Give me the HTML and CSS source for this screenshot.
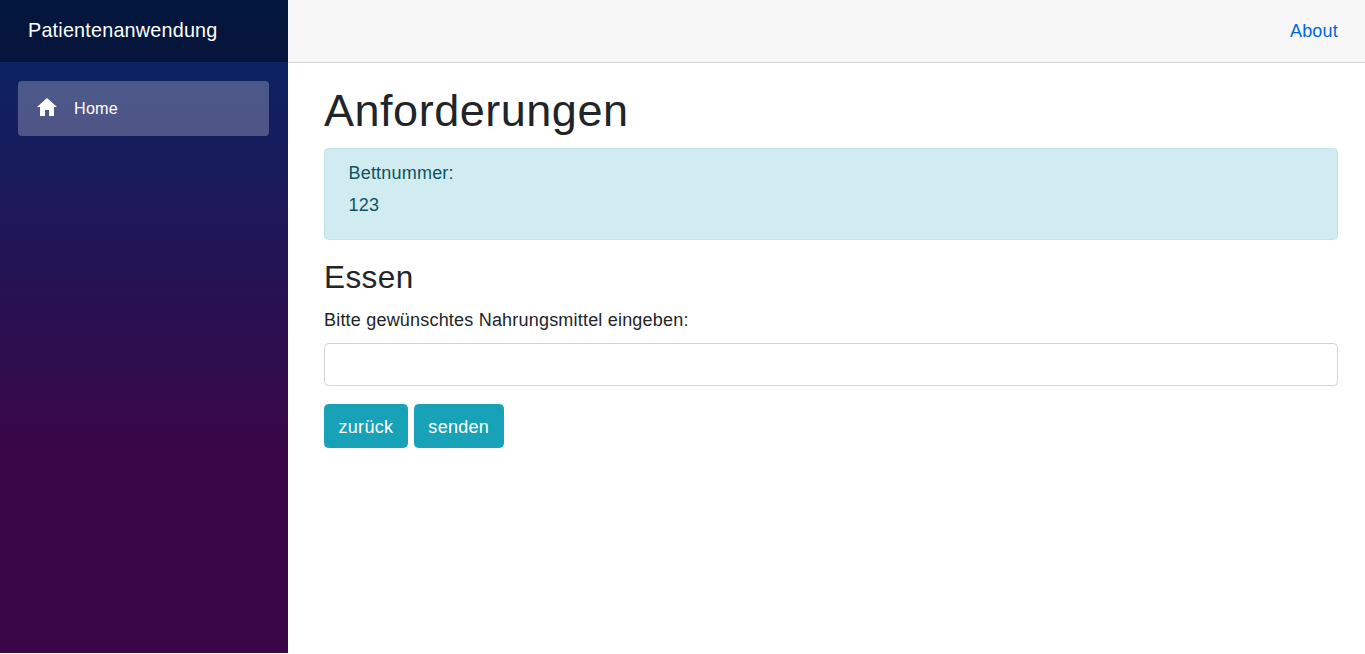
FILE: index.html
```html
<!DOCTYPE html>
<html lang="de">
<head>
    <meta charset="utf-8">
    <title>Patientenanwendung</title>
    <link rel="stylesheet" href="styles.css">
</head>
<body>
    <div class="page">
        <div class="sidebar">
            <div class="brand-row">
                <a class="brand" href="#">Patientenanwendung</a>
            </div>
            <ul class="nav-list">
                <li class="nav-item">
                    <a class="nav-link active" href="#">
                        <span class="nav-icon">
                            <svg width="20" height="18" viewBox="0 0 20 18"><path d="M10 0 0 9h3v9h5v-6h4v6h5V9h3z" fill="#fff"/></svg>
                        </span>
                        Home
                    </a>
                </li>
            </ul>
        </div>
        <div class="main">
            <div class="top-row">
                <a class="about" href="#">About</a>
            </div>
            <div class="content">
                <h1>Anforderungen</h1>
                <div class="alert">
                    <p>Bettnummer:</p>
                    <p>123</p>
                </div>
                <h3>Essen</h3>
                <label class="field-label" for="essen">Bitte gewünschtes Nahrungsmittel eingeben:</label>
                <input class="field" type="text" id="essen"/>
                <div class="buttons">
                    <button class="btn" type="button">zurück</button>
                    <button class="btn" type="button">senden</button>
                </div>
            </div>
        </div>
    </div>
</body>
</html>
```

FILE: styles.css
```css
html {
    font-size: 18px;
}

body {
    margin: 0;
    font-family: "Liberation Sans", Arial, sans-serif;
    font-size: 18px;
    line-height: 1.5;
    letter-spacing: 0.2px;
    color: #212529;
    background-color: #fff;
}

.page {
    display: flex;
    height: 653px;
}

.sidebar {
    width: 288px;
    flex-shrink: 0;
    background-image: linear-gradient(180deg, #052767 0%, #3a0647 70%);
}

.brand-row {
    display: flex;
    align-items: center;
    height: 62px;
    padding-left: 28px;
    background-color: rgba(0,0,0,0.4);
}

.brand {
    color: #fff;
    font-size: 19.8px;
    text-decoration: none;
}

.nav-list {
    list-style: none;
    margin: 0;
    padding: 19px 19px 0 18px;
}

.nav-link {
    display: flex;
    align-items: center;
    height: 55px;
    padding: 0 18px;
    border-radius: 4px;
    box-sizing: border-box;
    color: #fff;
    font-size: 16.2px;
    text-decoration: none;
}

.nav-link.active {
    background-color: rgba(255,255,255,0.25);
}

.nav-icon {
    display: flex;
    width: 36px;
    flex-shrink: 0;
    margin: 0 1px 3px;
}

.main {
    flex: 1;
    min-width: 0;
}

.top-row {
    display: flex;
    justify-content: flex-end;
    align-items: center;
    height: 62px;
    padding-right: 27px;
    background-color: #f7f7f7;
    border-bottom: 1px solid #d6d5d5;
}

.about {
    color: #0366d6;
    text-decoration: none;
}

.content {
    padding: 21px 27px 0 36px;
}

h1 {
    margin: 0 0 10px;
    font-size: 45px;
    font-weight: 500;
    line-height: 1.2;
    letter-spacing: 0.52px;
}

h3 {
    margin: 0 0 10px;
    font-size: 31.5px;
    font-weight: 500;
    line-height: 1.2;
    letter-spacing: 0.4px;
}

.alert {
    margin-bottom: 19px;
    padding: 10.5px 22.5px 15.5px 23.5px;
    border: 1px solid #bee5eb;
    border-radius: 4.5px;
    background-color: #d1ecf1;
    color: #0c5460;
}

.alert p {
    margin: 0 0 5px;
}

.field-label {
    display: block;
    margin-bottom: 9px;
}

.field {
    display: block;
    width: 100%;
    height: 43px;
    margin-bottom: 18.5px;
    padding: 6.75px 13.5px;
    box-sizing: border-box;
    border: 1px solid #ced4da;
    border-radius: 4.5px;
    background-color: #fff;
    font-size: 18px;
}

.buttons {
    display: flex;
    gap: 6px;
}

.btn {
    height: 44px;
    padding: 8px 13.5px 6px;
    border: 1px solid #17a2b8;
    border-radius: 4.5px;
    background-color: #17a2b8;
    color: #fff;
    font-family: inherit;
    font-size: 18px;
    line-height: 1.5;
    letter-spacing: 0.3px;
    cursor: pointer;
}
```
